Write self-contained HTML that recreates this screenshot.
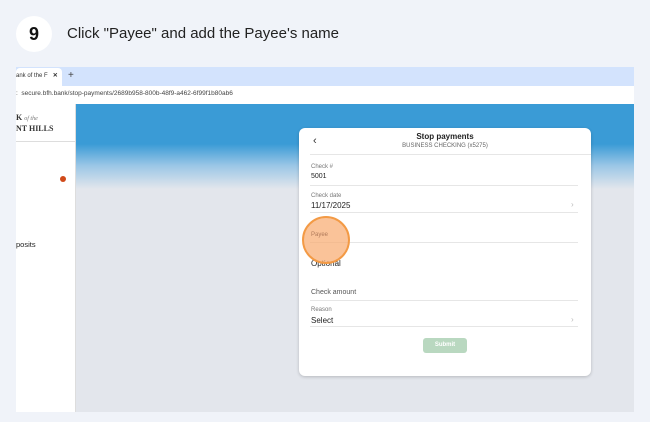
<!DOCTYPE html><html><head><style>
body{margin:0;width:650px;height:422px;background:#f0f3f9;font-family:"Liberation Sans",sans-serif;position:relative;overflow:hidden}
.a{position:absolute}
.lbl{font-size:6px;color:#777}
.val{font-size:8px;color:#222}
.ln{height:1px;background:#e6e6e6}
</style></head><body>
<div class="a" style="left:16px;top:16px;width:36px;height:36px;border-radius:50%;background:#fff;font-size:18px;font-weight:bold;text-align:center;line-height:36px;color:#111">9</div>
<div class="a" style="left:67px;top:25px;font-size:15px;color:#222">Click "Payee" and add the Payee's name</div>
<div class="a" style="left:16px;top:67px;width:618px;height:19px;background:#d3e3fd"></div>
<div class="a" style="left:16px;top:68px;width:46px;height:18px;background:#fff;border-radius:4px 4px 0 0;font-size:6px;line-height:17px;color:#333">ank of the F&nbsp;&nbsp;&nbsp;<b>✕</b></div>
<div class="a" style="left:68px;top:70px;font-size:10px;color:#444">+</div>
<div class="a" style="left:16px;top:86px;width:618px;height:18px;background:#fff"></div>
<div class="a" style="left:16px;top:90px;font-size:6.5px;color:#444">: &nbsp;secure.bfh.bank/stop-payments/2689b958-800b-48f9-a462-6f99f1b80ab6</div>
<div class="a" style="left:16px;top:104px;width:59px;height:308px;background:#fff;border-right:1px solid #ddd"></div>
<div class="a" style="left:16px;top:113px;font-family:'Liberation Serif',serif;font-weight:bold;font-size:8px;color:#333;line-height:9px">K <i style="font-weight:normal;font-size:6px;color:#777">of the</i><br>NT HILLS</div>
<div class="a" style="left:16px;top:141px;width:59px;height:1px;background:#ddd"></div>
<div class="a" style="left:60px;top:176px;width:6px;height:6px;border-radius:50%;background:#d04a1a"></div>
<div class="a" style="left:16px;top:240px;font-size:7.5px;color:#222">posits</div>
<div class="a" style="left:76px;top:104px;width:558px;height:308px;background:linear-gradient(#3a9bd6 0px,#3a9bd6 40px,#9cc7e6 62px,#e3e6ec 85px,#e3e6ec)"></div>
<div class="a" style="left:299px;top:128px;width:292px;height:248px;background:#fff;border-radius:6px;box-shadow:0 1px 3px rgba(0,0,0,.2)"></div>
<div class="a" style="left:313px;top:135px;font-size:11px;color:#333">‹</div>
<div class="a" style="left:299px;top:132px;width:292px;text-align:center;font-size:8px;font-weight:bold;color:#222">Stop payments</div>
<div class="a" style="left:299px;top:143px;width:292px;text-align:center;font-size:6px;color:#666">BUSINESS CHECKING (x5275)</div>
<div class="a ln" style="left:310px;top:154px;width:281px"></div>
<div class="a lbl" style="left:311px;top:164px">Check #</div>
<div class="a" style="left:311px;top:173px;font-size:7px;color:#222">5001</div>
<div class="a ln" style="left:310px;top:185px;width:268px"></div>
<div class="a lbl" style="left:311px;top:193px">Check date</div>
<div class="a val" style="left:311px;top:201px">11/17/2025</div>
<div class="a" style="left:571px;top:200px;font-size:8px;color:#bbb">›</div>
<div class="a ln" style="left:310px;top:212px;width:268px"></div>
<div class="a ln" style="left:310px;top:242px;width:268px"></div>
<div class="a val" style="left:311px;top:259px">Optional</div>
<div class="a" style="left:302px;top:216px;width:44px;height:44px;border-radius:50%;background:rgba(248,170,110,.7);border:2px solid #f39a45"></div>
<div class="a lbl" style="left:311px;top:232px;color:#b07a5a">Payee</div>
<div class="a" style="left:311px;top:289px;font-size:7px;color:#555">Check amount</div>
<div class="a ln" style="left:310px;top:300px;width:268px"></div>
<div class="a lbl" style="left:311px;top:307px">Reason</div>
<div class="a val" style="left:311px;top:316px">Select</div>
<div class="a" style="left:571px;top:315px;font-size:8px;color:#bbb">›</div>
<div class="a ln" style="left:310px;top:326px;width:268px"></div>
<div class="a" style="left:423px;top:338px;width:44px;height:15px;background:#b9d8c0;border-radius:3px;color:#fff;font-size:6px;font-weight:bold;text-align:center;line-height:15px">Submit</div>
</body></html>
